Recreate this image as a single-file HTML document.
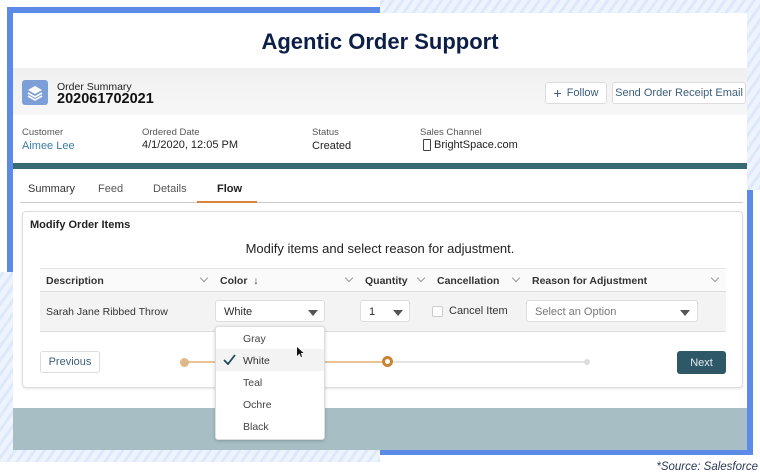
<!DOCTYPE html>
<html><head><meta charset="utf-8"><style>
*{margin:0;padding:0;box-sizing:border-box}
body{width:760px;height:475px;overflow:hidden;background:#fff;position:relative;font-family:"Liberation Sans",sans-serif;color:#2b2b2b}
.a{position:absolute}
.stripe{background:repeating-linear-gradient(-55deg,#dde8fb 0 3px,#eef4fe 3px 8px)}
.btn{position:absolute;background:#fff;border:1px solid #dcdcdc;border-radius:3px;font-size:11px;color:#3d5e7a;display:flex;align-items:center;justify-content:center}
.lbl{font-size:9.5px;color:#555}
.val{font-size:11px;color:#222}
.hd{font-size:10.5px;font-weight:bold;color:#333}
.chev{position:absolute;width:6px;height:6px;border-right:1px solid #999;border-bottom:1px solid #999;transform:rotate(45deg)}
.tri{position:absolute;width:0;height:0;border-left:5px solid transparent;border-right:5px solid transparent;border-top:6px solid #555}
.sel{position:absolute;background:#fff;border:1px solid #ddd;border-radius:3px;font-size:11px}
</style></head><body>
<div class="a stripe" style="left:380px;top:0;width:380px;height:190px"></div>
<div class="a stripe" style="left:0;top:272px;width:380px;height:190px"></div>
<div class="a" style="left:7px;top:7px;width:373px;height:265px;background:#5b8be6"></div>
<div class="a" style="left:380px;top:190px;width:373px;height:265px;background:#5b8be6"></div>
<div class="a" style="left:13px;top:13px;width:734px;height:437px;background:#fff"></div>
<div class="a" style="left:13px;top:29px;width:734px;text-align:center;font-size:22px;font-weight:bold;color:#0e1f47">Agentic Order Support</div>
<div class="a" style="left:13px;top:68px;width:734px;height:47px;background:linear-gradient(#f0f0f0,#f7f7f7)"></div>
<div class="a" style="left:22px;top:80px;width:26px;height:25px;background:#7d9fd8;border-radius:3px"></div>
<svg class="a" style="left:25px;top:83px" width="20" height="20" viewBox="0 0 20 20"><path d="M10 3 L17 7 L10 11 L3 7Z" fill="#fff"/><path d="M3 10 L10 14 L17 10" stroke="#fff" stroke-width="1.6" fill="none"/><path d="M3 13 L10 17 L17 13" stroke="#fff" stroke-width="1.6" fill="none"/></svg>
<div class="a" style="left:57px;top:81px;font-size:10.5px;color:#222">Order Summary</div>
<div class="a" style="left:57px;top:91px;font-size:14.5px;font-weight:bold;color:#111">202061702021</div>
<div class="btn" style="left:545px;top:82px;width:62px;height:22px"><span style="font-size:14px;margin-right:5px">+</span>Follow</div>
<div class="btn" style="left:612px;top:82px;width:134px;height:22px">Send Order Receipt Email</div>
<div class="a lbl" style="left:22px;top:127px">Customer</div>
<div class="a val" style="left:22px;top:140px;color:#3b7ca8">Aimee Lee</div>
<div class="a lbl" style="left:142px;top:127px">Ordered Date</div>
<div class="a val" style="left:142px;top:139px">4/1/2020, 12:05 PM</div>
<div class="a lbl" style="left:312px;top:127px">Status</div>
<div class="a val" style="left:312px;top:140px">Created</div>
<div class="a lbl" style="left:420px;top:127px">Sales Channel</div>
<div class="a" style="left:423px;top:139px;width:8px;height:12px;border:1.3px solid #444;border-radius:1px"></div>
<div class="a val" style="left:434px;top:139px">BrightSpace.com</div>
<div class="a" style="left:13px;top:163px;width:734px;height:6px;background:#386a74"></div>
<div class="a" style="left:20px;top:202px;width:723px;height:1px;background:#ccc"></div>
<div class="a" style="left:28px;top:183px;font-size:11px;color:#333">Summary</div>
<div class="a" style="left:98px;top:183px;font-size:11px;color:#555">Feed</div>
<div class="a" style="left:153px;top:183px;font-size:11px;color:#555">Details</div>
<div class="a" style="left:217px;top:183px;font-size:11px;font-weight:bold;color:#222">Flow</div>
<div class="a" style="left:197px;top:201px;width:60px;height:2px;background:#d9843c"></div>
<div class="a" style="left:22px;top:211px;width:721px;height:177px;border:1px solid #ddd;border-radius:4px;background:#fff;box-shadow:0 1px 2px rgba(0,0,0,.1)"></div>
<div class="a" style="left:30px;top:219px;font-size:11px;font-weight:bold;color:#222">Modify Order Items</div>
<div class="a" style="left:13px;top:241px;width:734px;text-align:center;font-size:13px;color:#222">Modify items and select reason for adjustment.</div>
<div class="a" style="left:40px;top:268px;width:686px;height:24px;background:#fafafa;border-top:1px solid #e5e5e5;border-bottom:1px solid #ddd"></div>
<div class="a hd" style="left:46px;top:275px">Description</div><div class="chev" style="left:201px;top:275px"></div>
<div class="a hd" style="left:220px;top:275px">Color &nbsp;↓</div><div class="chev" style="left:346px;top:275px"></div>
<div class="a hd" style="left:365px;top:275px">Quantity</div><div class="chev" style="left:418px;top:275px"></div>
<div class="a hd" style="left:437px;top:275px">Cancellation</div><div class="chev" style="left:513px;top:275px"></div>
<div class="a hd" style="left:532px;top:275px">Reason for Adjustment</div><div class="chev" style="left:712px;top:275px"></div>
<div class="a" style="left:40px;top:292px;width:686px;height:40px;background:#f3f3f3;border-bottom:1px solid #ddd"></div>
<div class="a" style="left:46px;top:306px;font-size:10.5px;color:#333">Sarah Jane Ribbed Throw</div>
<div class="sel" style="left:215px;top:300px;width:110px;height:22px;padding:5px 8px">White</div><div class="tri" style="left:308px;top:310px"></div>
<div class="sel" style="left:360px;top:300px;width:50px;height:22px;padding:5px 8px">1</div><div class="tri" style="left:393px;top:310px"></div>
<div class="a" style="left:432px;top:306px;width:11px;height:11px;border:1px solid #ccc;background:#fff;border-radius:2px"></div>
<div class="a" style="left:449px;top:305px;font-size:11px;color:#333">Cancel Item</div>
<div class="sel" style="left:526px;top:300px;width:172px;height:22px;padding:5px 8px;color:#777">Select an Option</div><div class="tri" style="left:680px;top:310px"></div>
<div class="btn" style="left:40px;top:351px;width:60px;height:22px;font-size:11px">Previous</div>
<div class="a" style="left:185px;top:361px;width:202px;height:2px;background:#e9c395"></div>
<div class="a" style="left:392px;top:361px;width:194px;height:2px;background:#e3e3e3"></div>
<div class="a" style="left:180px;top:358px;width:9px;height:9px;border-radius:50%;background:#e0b888"></div>
<div class="a" style="left:382px;top:356px;width:11px;height:11px;border-radius:50%;border:3px solid #c98436;background:#fff"></div>
<div class="a" style="left:584px;top:359px;width:6px;height:6px;border-radius:50%;background:#ddd"></div>
<div class="a" style="left:677px;top:351px;width:49px;height:23px;background:#2e5867;border-radius:3px;color:#e5eef0;font-size:11px;display:flex;align-items:center;justify-content:center">Next</div>
<div class="a" style="left:13px;top:408px;width:734px;height:42px;background:#a6bec4"></div>
<div class="a" style="left:215px;top:326px;width:110px;height:114px;background:#fff;border:1px solid #ddd;border-radius:3px;box-shadow:0 1px 3px rgba(0,0,0,.2)"></div>
<div class="a" style="left:216px;top:349px;width:108px;height:22px;background:#f3f3f3"></div>
<div class="a" style="left:243px;top:333px;font-size:10.5px;color:#444">Gray</div>
<svg class="a" style="left:223px;top:354px" width="13" height="11" viewBox="0 0 13 11"><path d="M1 6 L5 10 L12 1" stroke="#1f4a5c" stroke-width="1.8" fill="none"/></svg>
<div class="a" style="left:243px;top:355px;font-size:10.5px;color:#333">White</div>
<div class="a" style="left:243px;top:377px;font-size:10.5px;color:#444">Teal</div>
<div class="a" style="left:243px;top:399px;font-size:10.5px;color:#444">Ochre</div>
<div class="a" style="left:243px;top:421px;font-size:10.5px;color:#444">Black</div>
<svg class="a" style="left:296px;top:346px" width="8" height="12" viewBox="0 0 8 12"><path d="M1 1 L1 10 L3.5 7.5 L5 11 L6 10.5 L4.8 7 L7.5 7Z" fill="#111"/></svg>
<div class="a" style="right:2px;top:461px;font-size:11.5px;font-style:italic;color:#2c3a55">*Source: Salesforce</div>
</body></html>
